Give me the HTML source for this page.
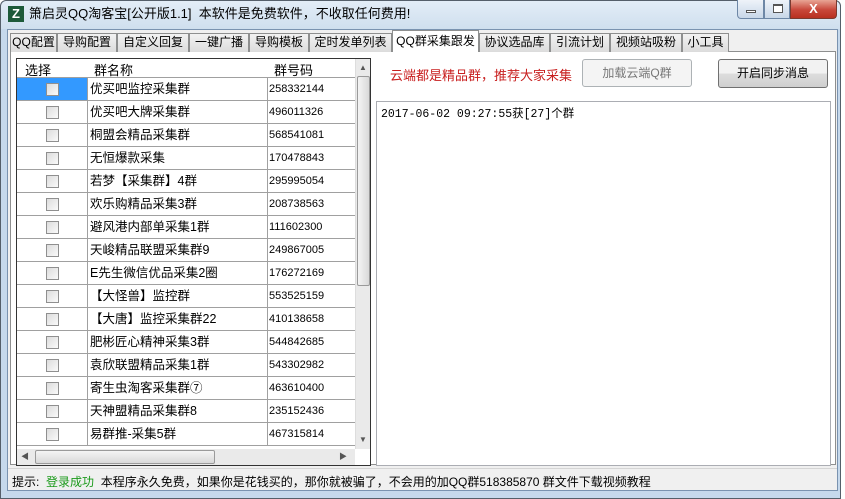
<!DOCTYPE html>
<html><head><meta charset="utf-8"><style>
*{margin:0;padding:0;box-sizing:border-box}
body{width:845px;height:499px;overflow:hidden;background:#fff;font-family:"Liberation Sans","Noto Sans CJK SC",sans-serif;font-size:12px;color:#000;position:relative}
.a{position:absolute}
.frame{left:0;top:0;width:841px;height:499px;background:#c6d9ec;border:1px solid #555f6a;border-radius:6px 6px 0 0}
.title{left:1px;top:1px;width:839px;height:28px;background:linear-gradient(#e3edf7,#cfdfee);border-radius:6px 6px 0 0}
.client{left:7px;top:29px;width:831px;height:462px;background:#f0f0f0;border:1px solid #7a93b0}
.tab{position:absolute;top:33px;height:19px;border:1px solid #8e8f8f;border-bottom:none;background:linear-gradient(#f2f2f2,#dcdcdc);font-size:12px;line-height:17px;text-align:center;white-space:nowrap}
.panel{left:10px;top:51px;width:826px;height:414px;background:#fff;border:1px solid #8e8f8f}
.grid{left:16px;top:58px;width:355px;height:408px;border:1px solid #333;background:#fff;overflow:hidden}
.row{position:absolute;left:0;height:23px;width:338px;border-bottom:1px solid #a0a0a0}
.c{position:absolute;top:0;height:22px;line-height:22px;border-right:1px solid #a0a0a0;white-space:nowrap;overflow:hidden}
.cb{position:absolute;left:29px;top:5px;width:13px;height:13px;border:1px solid #8f8f8f;background:linear-gradient(135deg,#dcdcdc,#fafafa)}
.btn{position:absolute;border:1px solid #707070;border-radius:3px;background:linear-gradient(#f2f2f2 50%,#dddddd 50%,#cfcfcf);text-align:center;font-size:12px}
</style></head><body>
<div class="a frame"></div>
<div class="a title"></div>
<div class="a" style="left:8px;top:6px;width:16px;height:16px;background:#1d5a3a;color:#fff;font-weight:bold;font-size:13px;line-height:16px;text-align:center">Z</div>
<div class="a" style="left:29px;top:6px;font-size:13px;line-height:16px">箫启灵QQ淘客宝[公开版1.1]&nbsp; 本软件是免费软件，不收取任何费用!</div>
<div class="a" style="left:737px;top:0px;width:27px;height:19px;border:1px solid #6d87a6;border-top:none;border-radius:0 0 0 4px;background:linear-gradient(#eef3f9,#c8d7e8)"><div class="a" style="left:8px;top:10px;width:10px;height:3px;background:#fff;border:1px solid #555"></div></div>
<div class="a" style="left:764px;top:0px;width:26px;height:19px;border:1px solid #6d87a6;border-top:none;background:linear-gradient(#eef3f9,#c8d7e8)"><div class="a" style="left:8px;top:4px;width:10px;height:9px;border:1px solid #555;border-top-width:2px;background:#fff"></div></div>
<div class="a" style="left:790px;top:0px;width:47px;height:19px;border:1px solid #7a3a30;border-top:none;border-radius:0 0 4px 0;background:linear-gradient(#e8a595,#c8473a 55%,#b83020);color:#fff;font-weight:bold;text-align:center;line-height:18px;font-size:13px">X</div>
<div class="a client"></div>
<div class="a panel"></div>
<div class="tab" style="left:10px;width:47px">QQ配置</div>
<div class="tab" style="left:57px;width:60px">导购配置</div>
<div class="tab" style="left:117px;width:72px">自定义回复</div>
<div class="tab" style="left:189px;width:60px">一键广播</div>
<div class="tab" style="left:249px;width:60px">导购模板</div>
<div class="tab" style="left:309px;width:83px">定时发单列表</div>
<div class="tab" style="left:392px;top:30px;height:22px;width:87px;background:#fff;line-height:20px">QQ群采集跟发</div>
<div class="tab" style="left:479px;width:71px">协议选品库</div>
<div class="tab" style="left:550px;width:60px">引流计划</div>
<div class="tab" style="left:610px;width:72px">视频站吸粉</div>
<div class="tab" style="left:682px;width:47px">小工具</div>

<div class="a grid">
<div class="a" style="left:0;top:0;width:338px;height:19px;background:#fff;border-bottom:1px solid #a0a0a0">
<span class="a" style="left:8px;top:1px;font-size:13px">选择</span>
<span class="a" style="left:77px;top:1px;font-size:13px">群名称</span>
<span class="a" style="left:257px;top:1px;font-size:13px">群号码</span></div>
<div id="rows"></div>
<div class="a" style="left:338px;top:0;width:16px;height:390px;background:#eaeaea;border-left:1px solid #ddd">
<div class="a" style="left:3px;top:4px;font-size:8px;color:#555">▲</div>
<div class="a" style="left:1px;top:17px;width:13px;height:210px;border:1px solid #9a9a9a;border-radius:2px;background:linear-gradient(90deg,#f4f4f4,#d9d9d9)"></div>
<div class="a" style="left:3px;top:376px;font-size:8px;color:#555">▼</div></div>
<div class="a" style="left:0;top:390px;width:338px;height:16px;background:#eaeaea">
<div class="a" style="left:4px;top:2px;font-size:8px;color:#555">◀</div>
<div class="a" style="left:18px;top:1px;width:180px;height:14px;border:1px solid #9a9a9a;border-radius:2px;background:linear-gradient(#f4f4f4,#d9d9d9)"></div>
<div class="a" style="left:322px;top:2px;font-size:8px;color:#555">▶</div></div>
</div>

<div class="a" style="left:390px;top:65px;color:#c81e1e;font-size:13px">云端都是精品群，推荐大家采集</div>
<div class="btn" style="left:582px;top:59px;width:110px;height:28px;line-height:26px;color:#777;border-color:#adb2b5;background:#f4f4f4">加载云端Q群</div>
<div class="btn" style="left:718px;top:59px;width:110px;height:29px;line-height:27px">开启同步消息</div>
<div class="a" style="left:376px;top:101px;width:455px;height:365px;border:1px solid #abadb3;background:#fff">
<div class="a" style="left:4px;top:3px;font-family:'Liberation Mono','Noto Sans CJK SC',monospace;font-size:11.5px">2017-06-02 09:27:55获[27]个群</div></div>

<div class="a" style="left:8px;top:468px;width:829px;height:1px;background:#d5d5d5"></div>
<div class="a" style="left:12px;top:473px">提示:&nbsp; <span style="color:#1a9a1a">登录成功</span>&nbsp; 本程序永久免费，如果你是花钱买的，那你就被骗了，不会用的加QQ群518385870 群文件下载视频教程</div>
<script>
var d=[["优买吧监控采集群","258332144"],["优买吧大牌采集群","496011326"],["桐盟会精品采集群","568541081"],["无恒爆款采集","170478843"],["若梦【采集群】4群","295995054"],["欢乐购精品采集3群","208738563"],["避风港内部单采集1群","111602300"],["天峻精品联盟采集群9","249867005"],["E先生微信优品采集2圈","176272169"],["【大怪兽】监控群","553525159"],["【大唐】监控采集群22","410138658"],["肥彬匠心精神采集3群","544842685"],["袁欣联盟精品采集1群","543302982"],["寄生虫淘客采集群⑦","463610400"],["天神盟精品采集群8","235152436"],["易群推-采集5群","467315814"]];
var h="";d.forEach(function(r,i){var t=19+i*23;h+='<div class="row" style="top:'+t+'px"><div class="c" style="left:0;width:71px;'+(i==0?'background:#3399ff':'')+'"><div class="cb"></div></div><div class="c" style="left:71px;width:180px;padding-left:2px;font-size:12.5px">'+r[0]+'</div><div class="c" style="left:251px;width:87px;padding-left:1px;font-size:11px;border-right:none">'+r[1]+'</div></div>'});
document.getElementById("rows").innerHTML=h;
</script>
</body></html>
